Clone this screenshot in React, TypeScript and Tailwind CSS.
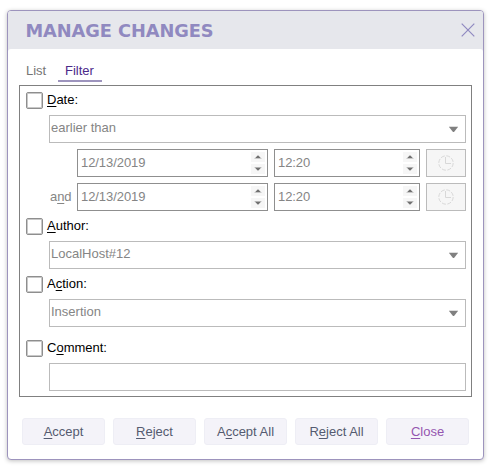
import React from "react";

function Key({ text, at }: { text: string; at: number }) {
  return (
    <span className="whitespace-pre">
      {text.slice(0, at)}
      <span className="underline decoration-1 underline-offset-2 [text-decoration-skip-ink:none]">{text[at]}</span>
      {text.slice(at + 1)}
    </span>
  );
}

function Check({ text, at, className }: { text: string; at: number; className: string }) {
  return (
    <div className={`flex h-[17px] items-start gap-1 pl-1.5 text-black ${className}`}>
      <span className="h-[17px] w-[17px] rounded-xs border border-[#8e8e8e] shadow-[inset_0_0_0_1px_#c8c8c8]" />
      <span className="leading-[15px]"><Key text={text} at={at} /></span>
    </div>
  );
}

function Select({ value }: { value: string }) {
  return (
    <div className="mt-1.5 ml-[29px] flex h-7 w-[417px] items-start justify-between border border-[#bbbbbb] pr-[7px] pl-px leading-[15px]">
      <span className="mt-1">{value}</span>
      <svg width="9" height="6" viewBox="0 0 9 6" className="mt-2.5">
        <path d="M0 0h9v1h-9z" fill="#dedede" />
        <path d="M0 1h9L5 6h-1z" fill="#808080" />
      </svg>
    </div>
  );
}

function Spin({ value, className }: { value: string; className: string }) {
  return (
    <div className={`flex h-7 items-center justify-between border border-[#8f8f8f] pr-0.5 pl-[3px] leading-[15px] ${className}`}>
      <span className="-mt-px tracking-[-0.07px]">{value}</span>
      <span className="flex flex-col gap-0.5">
        <span className="flex h-2.5 w-3.5 items-center justify-center bg-[#f6f6f6]">
          <svg width="8" height="4" viewBox="0 0 8 4">
            <path d="M1 3.2L3.6 0.4h0.8L7 3.2z" fill="#707070" />
            <path d="M0.5 3h7v1h-7z" fill="#c8c8c8" />
          </svg>
        </span>
        <span className="flex h-2.5 w-3.5 items-center justify-center bg-[#f6f6f6]">
          <svg width="8" height="4" viewBox="0 0 8 4">
            <path d="M0.5 0h7v1h-7z" fill="#c8c8c8" />
            <path d="M1 0.8h6L4.4 3.6h-0.8z" fill="#707070" />
          </svg>
        </span>
      </span>
    </div>
  );
}

function DateRow({ label, className }: { label?: React.ReactNode; className: string }) {
  return (
    <div className={`flex items-center ${className}`}>
      <span className="-mt-px w-[57px] pl-[30px] leading-[15px] tracking-[-0.1px]">{label}</span>
      <Spin value="12/13/2019" className="w-[191px]" />
      <Spin value="12:20" className="ml-1.5 w-[146px]" />
      <span className="ml-1.5 flex h-7 w-10 items-center justify-center border border-[#bbbbbb] bg-[#f6f6f6]">
        <svg width="16" height="16" viewBox="0 0 16 16" fill="none" stroke="#d8d8d8">
          <circle cx="8" cy="8" r="7.2" strokeDasharray="4.2 1.455" />
          <path d="M7.5 2v6.5H13" />
        </svg>
      </span>
    </div>
  );
}

function Button({ text, at, className = "text-[#555b70]" }: { text: string; at: number; className?: string }) {
  return (
    <button className={`h-[27px] w-[83px] rounded-[3px] border border-[#eeeef5] bg-[#f4f3f9] pb-px leading-[15px] ${className}`}>
      <Key text={text} at={at} />
    </button>
  );
}

export default function App() {
  return (
    <div className="h-[469px] w-[491px] overflow-hidden bg-white pt-2.5 pl-[7px] font-['Liberation_Sans',Arial,sans-serif] text-[13px] text-[#858585]">
      <div className="h-[450px] w-[477px] overflow-hidden rounded-[4px] border border-[#9d94bd] bg-white shadow-[0_1px_4px_rgba(0,0,0,0.25)]">
        <header className="flex h-[38px] items-center justify-between bg-[#e6e7ec] pr-2 pl-[17.5px]">
          <h1 className="pt-0.5 font-['DejaVu_Sans',sans-serif] text-[17.8px] leading-6 font-bold tracking-[-0.08px] text-[#9089c0]">MANAGE CHANGES</h1>
          <svg width="14" height="14" viewBox="0 0 14 14" stroke="#9089c0" strokeWidth="1.2">
            <path d="M0.7 0.7l12.6 12.6M13.3 0.7L0.7 13.3" />
          </svg>
        </header>
        <div className="bg-[#e6e7ec]">
          <nav className="flex h-[33px] rounded-t-[3px] bg-white pt-3.5 pl-[18px] leading-[15px]">
            <span className="w-8 text-[#757575]">List</span>
            <span className="h-[19px] w-11 border-b-2 border-[#9d94bd] pl-[7px] text-[#4b2a8a]">Filter</span>
          </nav>
        </div>
        <section className="mt-[3px] ml-[11px] h-[312px] w-[453px] border border-[#808080]">
          <Check text="Date:" at={0} className="mt-1.5" />
          <Select value="earlier than" />
          <DateRow className="mt-1.5" />
          <DateRow label={<Key text="and" at={1} />} className="mt-1.5" />
          <Check text="Author:" at={0} className="mt-[7px]" />
          <Select value="LocalHost#12" />
          <Check text="Action:" at={1} className="mt-[7px]" />
          <Select value="Insertion" />
          <Check text="Comment:" at={1} className="mt-[13px]" />
          <div className="mt-1.5 ml-[29px] h-7 w-[417px] border border-[#bbbbbb]" />
        </section>
        <footer className="mt-[21px] ml-3.5 flex gap-2">
          <Button text="Accept" at={0} />
          <Button text="Reject" at={0} />
          <Button text="Accept All" at={1} />
          <Button text="Reject All" at={1} />
          <Button text="Close" at={0} className="text-[#9456b0]" />
        </footer>
      </div>
    </div>
  );
}
